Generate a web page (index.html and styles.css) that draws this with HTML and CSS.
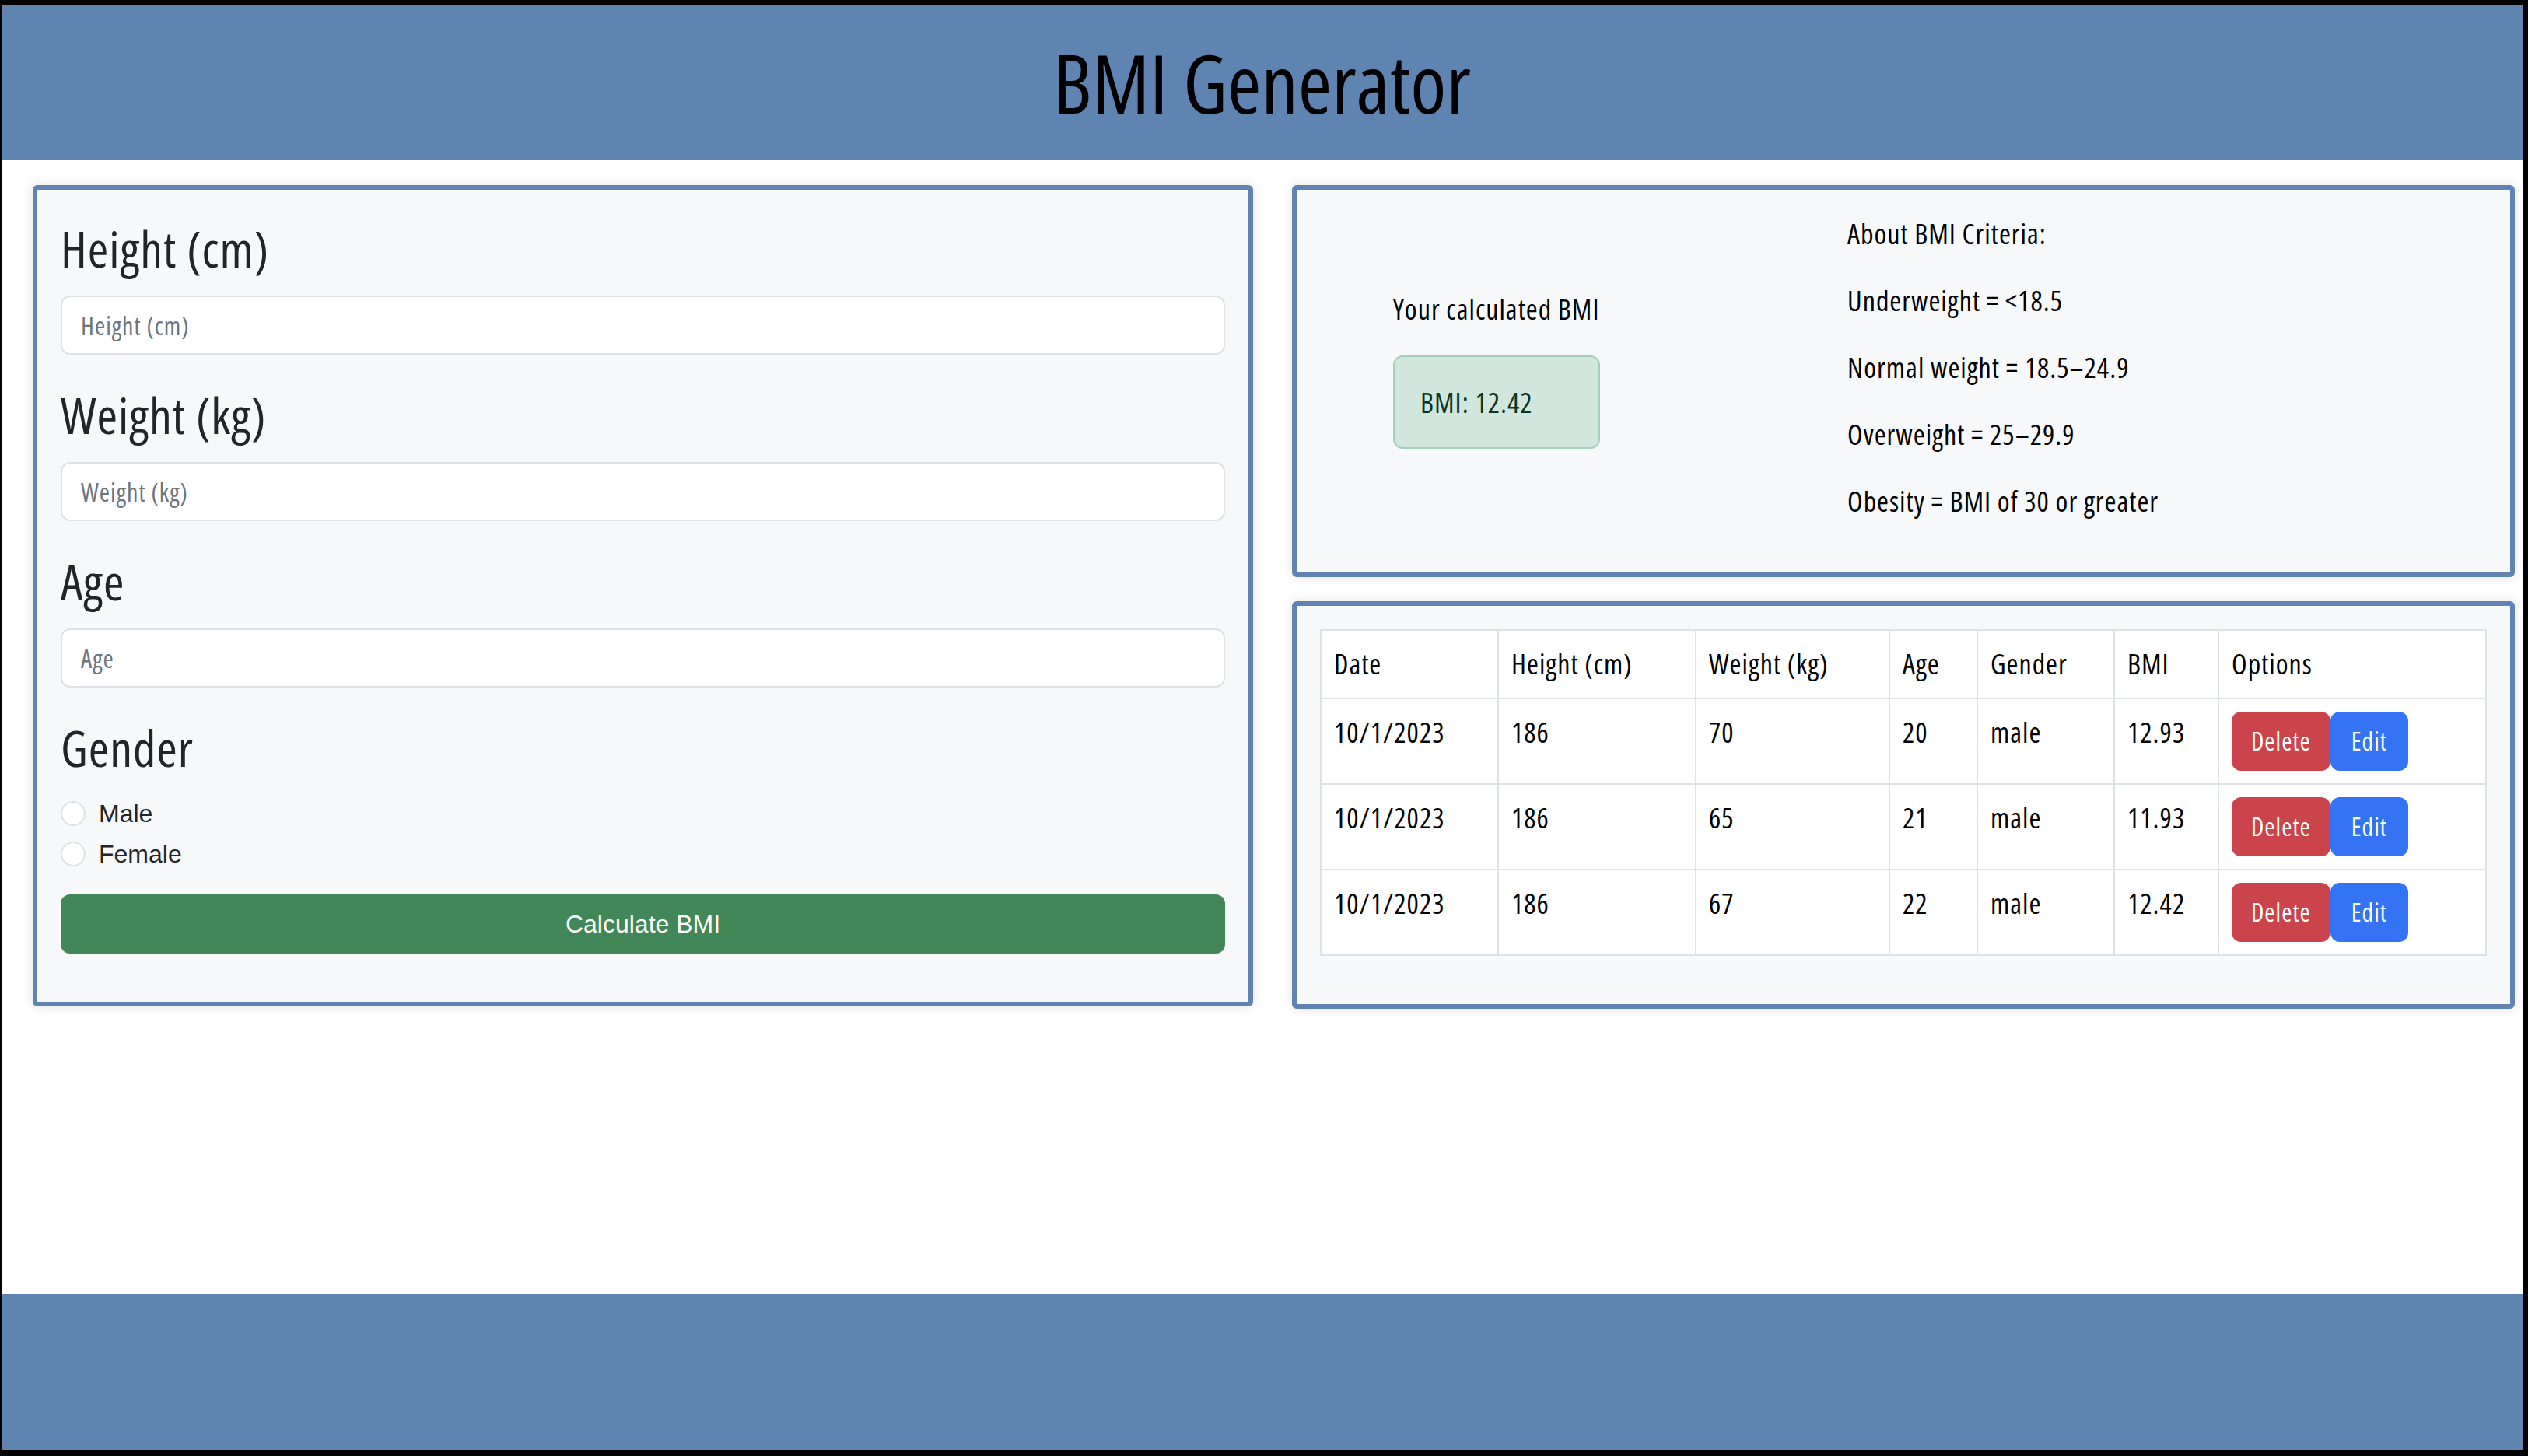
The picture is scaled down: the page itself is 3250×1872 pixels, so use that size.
FILE: index.html
```html
<!DOCTYPE html>
<html lang="en">
<head>
<meta charset="utf-8">
<title>BMI Generator</title>
<link rel="stylesheet" href="styles.css">
</head>
<body>
<div class="page">
  <header class="site-header">
    <h1 class="title">BMI Generator</h1>
  </header>
  <main class="main">
    <section class="card form-card">
      <div class="field">
        <h2 class="field-title">Height (cm)</h2>
        <input class="input" type="text" placeholder="Height (cm)">
      </div>
      <div class="field">
        <h2 class="field-title">Weight (kg)</h2>
        <input class="input" type="text" placeholder="Weight (kg)">
      </div>
      <div class="field">
        <h2 class="field-title">Age</h2>
        <input class="input" type="text" placeholder="Age">
      </div>
      <div class="field">
        <h2 class="field-title">Gender</h2>
        <label class="check"><input class="radio" type="radio" name="gender">Male</label>
        <label class="check"><input class="radio" type="radio" name="gender">Female</label>
      </div>
      <button class="calc-btn" type="button">Calculate BMI</button>
    </section>
    <div class="right-col">
      <section class="card result-card">
        <div class="result">
          <p class="result-label">Your calculated BMI</p>
          <div class="alert">BMI: 12.42</div>
        </div>
        <div class="criteria">
          <p>About BMI Criteria:</p>
          <p>Underweight = &lt;18.5</p>
          <p>Normal weight = 18.5–24.9</p>
          <p>Overweight = 25–29.9</p>
          <p>Obesity = BMI of 30 or greater</p>
        </div>
      </section>
      <section class="card table-card">
        <table class="records">
          <colgroup>
            <col class="c-date"><col class="c-height"><col class="c-weight"><col class="c-age"><col class="c-gender"><col class="c-bmi"><col class="c-options">
          </colgroup>
          <thead>
            <tr><th>Date</th><th>Height (cm)</th><th>Weight (kg)</th><th>Age</th><th>Gender</th><th>BMI</th><th>Options</th></tr>
          </thead>
          <tbody>
            <tr><td>10/1/2023</td><td>186</td><td>70</td><td>20</td><td>male</td><td>12.93</td><td><div class="actions"><button class="btn btn-delete" type="button">Delete</button><button class="btn btn-edit" type="button">Edit</button></div></td></tr>
            <tr><td>10/1/2023</td><td>186</td><td>65</td><td>21</td><td>male</td><td>11.93</td><td><div class="actions"><button class="btn btn-delete" type="button">Delete</button><button class="btn btn-edit" type="button">Edit</button></div></td></tr>
            <tr><td>10/1/2023</td><td>186</td><td>67</td><td>22</td><td>male</td><td>12.42</td><td><div class="actions"><button class="btn btn-delete" type="button">Delete</button><button class="btn btn-edit" type="button">Edit</button></div></td></tr>
          </tbody>
        </table>
      </section>
    </div>
  </main>
  <footer class="site-footer"></footer>
</div>
</body>
</html>
```

FILE: styles.css
```css
* { box-sizing: border-box; }

html, body { margin: 0; }

body {
  background: #000;
  padding: 6px 7px 8px 2px;
  font-family: "Open Sans", "Liberation Sans", Arial, sans-serif;
  font-stretch: condensed;
  font-size: 36px;
  letter-spacing: 1px;
  color: #000;
}

.page {
  background: #fff;
  height: 1858px;
  display: flex;
  flex-direction: column;
}

.site-header {
  flex: none;
  height: 200px;
  background: #6084b1;
  text-align: center;
}

.title {
  margin: 0;
  font-family: "Open Sans", "Liberation Sans", Arial, sans-serif;
  font-stretch: condensed;
  font-size: 105px;
  line-height: 200px;
  font-weight: 500;
  letter-spacing: 0;
  color: #000;
}

.main {
  flex: 1;
  display: grid;
  grid-template-columns: 1fr 1fr;
  column-gap: 50px;
  align-items: start;
  padding: 32px 10px 0 40px;
}

.card {
  background: #f7f8fa;
  border: 6px solid #6084b1;
  border-radius: 6px;
  box-shadow: 0 0 14px rgba(0, 0, 0, 0.12);
}

.form-card {
  padding: 37px 30px 32px;
}

.field-title {
  margin: 0 0 22px;
  font-size: 64px;
  line-height: 77px;
  font-weight: 500;
  letter-spacing: 1px;
  color: #212529;
}

.input {
  display: block;
  width: 100%;
  height: 76px;
  margin: 0 0 39px;
  padding: 12px 24px;
  border: 2px solid #dee2e6;
  border-radius: 12px;
  background: #fff;
  font-family: "Open Sans", "Liberation Sans", Arial, sans-serif;
  font-stretch: condensed;
  font-size: 32px;
  line-height: 48px;
  letter-spacing: 1px;
  color: #212529;
}

.input::placeholder { color: #6c757d; }

.check {
  display: flex;
  align-items: flex-start;
  min-height: 48px;
  margin-bottom: 4px;
  font-family: "Liberation Sans", Arial, sans-serif;
  font-stretch: normal;
  font-size: 32px;
  line-height: 48px;
  letter-spacing: 0;
  color: #212529;
}

.radio {
  appearance: none;
  -webkit-appearance: none;
  flex: none;
  width: 32px;
  height: 32px;
  margin: 8px 17px 0 0;
  border: 2px solid #dee2e6;
  border-radius: 50%;
  background: #fff;
}

.calc-btn {
  display: block;
  width: 100%;
  height: 76px;
  margin: 28px 0 30px;
  border: 0;
  border-radius: 12px;
  background: #418758;
  color: #fff;
  font-family: "Liberation Sans", Arial, sans-serif;
  font-stretch: normal;
  font-size: 32px;
  line-height: 48px;
  letter-spacing: 0;
}

.right-col {
  display: flex;
  flex-direction: column;
  gap: 31px;
}

.result-card {
  display: flex;
  gap: 318px;
  padding: 30px 0 32px 124px;
}

.result {
  flex: none;
  width: 266px;
  padding-top: 97px;
}

.result-label {
  margin: 0 0 32px;
  line-height: 54px;
  white-space: nowrap;
}

.alert {
  height: 120px;
  padding: 32px 32px 32px 33px;
  border: 2px solid #a3cfbb;
  border-radius: 12px;
  background: #d1e7dd;
  color: #0a3622;
  line-height: 54px;
  white-space: nowrap;
}

.criteria p {
  margin: 0 0 32px;
  line-height: 54px;
}

.table-card {
  padding: 30px;
}

.records {
  width: 100%;
  table-layout: fixed;
  border-collapse: collapse;
  margin-bottom: 32px;
  background: #fff;
}

.c-date { width: 228px; }
.c-height { width: 254px; }
.c-weight { width: 249px; }
.c-age { width: 113px; }
.c-gender { width: 176px; }
.c-bmi { width: 134px; }
.c-options { width: 344px; }

.records th,
.records td {
  border: 2px solid #dee2e6;
  padding: 16px;
  text-align: left;
  vertical-align: top;
  font-weight: 400;
  line-height: 54px;
  color: #000;
}

.actions { display: flex; }

.btn {
  height: 76px;
  padding: 14px 25px;
  border: 0;
  border-radius: 12px;
  color: #fff;
  font-family: "Open Sans", "Liberation Sans", Arial, sans-serif;
  font-stretch: condensed;
  font-size: 32px;
  line-height: 48px;
  letter-spacing: 1px;
}

.btn-delete { background: #cb444b; }
.btn-edit { background: #3474f4; padding: 14px 27px; }

.site-footer {
  flex: none;
  height: 200px;
  background: #6084b1;
}
```
